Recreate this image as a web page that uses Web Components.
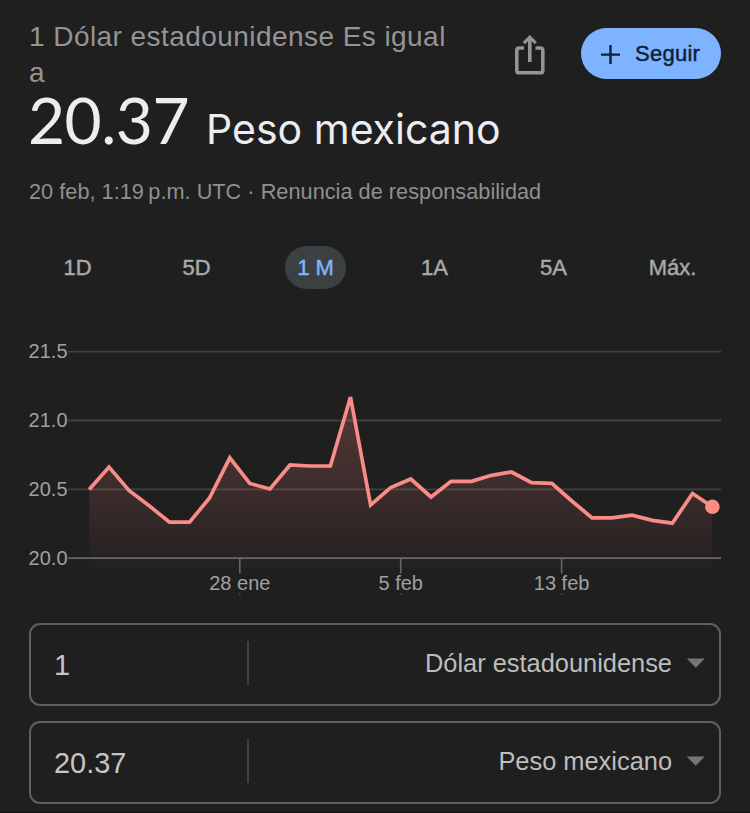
<!DOCTYPE html>
<html lang="es">
<head>
<meta charset="utf-8">
<title>Conversor de divisas</title>
<style>
html,body{margin:0;height:813px;overflow:hidden;background:#1f1f1f}
body{font-family:"Liberation Sans",Arial,sans-serif;color:#9a9a9a}
</style>
</head>
<body>
<currency-page></currency-page>
<script>
function define(name, markup, setup) {
  const template = document.createElement('template');
  template.innerHTML = markup;
  customElements.define(name, class extends HTMLElement {
    connectedCallback() {
      if (this.shadowRoot) return;
      this.attachShadow({mode: 'open'}).append(template.content.cloneNode(true));
      if (setup) setup(this, this.shadowRoot);
    }
  });
}

define('share-button', `
<style>:host{display:block;width:30px;height:42px}svg{display:block}</style>
<svg width="30" height="42" viewBox="0 0 30 42" fill="none" stroke="#949494" stroke-width="3.6">
  <path d="M9 14H4.2Q1.8 14 1.8 16.4V36.4Q1.8 38.8 4.2 38.8H25.4Q27.8 38.8 27.8 36.4V16.4Q27.8 14 25.4 14H20.5"/>
  <path d="M14.8 28V4"/><path d="M8.8 9.2L14.8 3.2L20.8 9.2" stroke-width="3.2"/>
</svg>`);

define('follow-button', `
<style>
:host{display:flex;align-items:center;box-sizing:border-box;width:141px;height:51px;padding-left:20px;gap:15px;border-radius:26px;background:#7eb4ff;color:#102038;font-size:22px;letter-spacing:.25px;-webkit-text-stroke:.45px #102038}
svg{display:block}
</style>
<svg width="19" height="20" viewBox="0 0 19 20" stroke="#102038" stroke-width="2.4"><path d="M0 10.6H19M9.5 1V20"/></svg><slot></slot>`);

define('rate-header', `
<style>
:host{display:block}
.top{display:flex;height:72px}
.from{width:430px;font-size:28px;line-height:36px;letter-spacing:.44px;color:#949494;flex:none}
share-button{margin:15px 0 0 56px}
follow-button{margin:9px 0 0 36px}
.value{display:flex;align-items:baseline;height:58px;line-height:58px;color:#ededf0;white-space:nowrap}
.num{font-family:Lato,sans-serif;font-size:64px;letter-spacing:-.5px;margin-left:-1px}
.cur{font-family:Inter,sans-serif;font-size:41px;margin-left:17px}
.meta{margin-top:30px;font-size:21.7px;line-height:26px;letter-spacing:.03px;color:#8f8f8f;white-space:nowrap}
</style>
<div class="top"><div class="from"><slot name="from"></slot></div><share-button></share-button><follow-button>Seguir</follow-button></div>
<div class="value"><span class="num"><slot name="amount"></slot></span><span class="cur"><slot name="currency"></slot></span></div>
<div class="meta"><slot name="meta"></slot></div>`);

define('range-tab', `
<style>
:host{display:flex;justify-content:center}
span{box-sizing:border-box;height:43px;line-height:43px;padding:0 12px;border-radius:22px;font-size:22px;color:#a9a9a9;-webkit-text-stroke:.45px currentColor;white-space:nowrap}
:host([selected]) span{background:#3b4043;color:#82b4fb}
</style><span><slot></slot></span>`);

define('range-tabs', `
<style>:host{display:grid;grid-template-columns:repeat(6,119px);margin:41px 0 0 -11px}</style><slot></slot>`);

define('rate-chart', `
<style>:host{display:block;height:265px;margin-top:46px}svg{display:block}text{font:20px "Liberation Sans",Arial,sans-serif;fill:#a0a0a0}</style>
<svg width="692" height="265" viewBox="29 335 692 265">
  <defs><linearGradient id="fade" gradientUnits="userSpaceOnUse" x1="0" y1="397" x2="0" y2="568">
    <stop offset="0" stop-color="#ff8880" stop-opacity=".25"/><stop offset="1" stop-color="#ff8880" stop-opacity=".02"/></linearGradient></defs>
  <g id="grid"></g><path id="area" fill="url(#fade)"/>
  <polyline id="line" fill="none" stroke="#f98c86" stroke-width="3.7" stroke-miterlimit="4"/>
  <circle cx="712.4" cy="506.8" r="7.3" fill="#ff8b85"/>
</svg>`, (host, root) => {
  const points = [[89.2,489.5],[109,467],[129,490.5],[149.5,506],[169.5,522.2],[189.5,522.2],[209.5,498],[229.8,457.8],[249.8,483.5],[270,489],[290,465],[310,466],[330.4,466],[350.5,397],[370.6,505],[390.7,487.5],[410.8,479],[431,497],[451,481.3],[471.5,481.3],[491.5,475.3],[511.5,472],[531.5,482.7],[551.8,483.3],[571.8,501],[592,517.8],[612,517.8],[632,515.2],[652.3,520.4],[672.3,523.2],[692.5,493.5],[712.4,506.8]];
  const line = points.map(p => p.join()).join(' ');
  root.getElementById('line').setAttribute('points', line);
  root.getElementById('area').setAttribute('d', `M${line}V568H89.2Z`);
  root.getElementById('grid').innerHTML =
    [['21.5',351.6,358],['21.0',420.5,427],['20.5',489.3,496],['20.0',558.2,565]].map(([t,y,b]) =>
      `<text x="28.6" y="${b}">${t}</text><path d="M68 ${y}H721.5" stroke="${t === '20.0' ? '#666' : '#404141'}" stroke-width="1.8"/>`).join('') +
    [['28 ene',239.8],['5 feb',400.7],['13 feb',561.6]].map(([t,x]) =>
      `<path d="M${x} 558V573.5M${x} 593.5V594.5" stroke="#666" stroke-width="1.6"/><text x="${x}" y="590" text-anchor="middle">${t}</text>`).join('');
});

define('currency-field', `
<style>
:host{display:flex;align-items:center;box-sizing:border-box;width:692px;height:83px;border:2px solid #5d5f64;border-radius:11px;padding:0 14px 0 23px}
.amount{width:193px;font-size:28.9px;color:#c5c5c5;padding-top:1px}
.rule{width:2px;height:44px;background:#414244;margin-top:-4px}
.name{flex:1;text-align:right;font-size:25.4px;color:#bdbdbd;margin-top:-3px;white-space:nowrap}
svg{display:block;margin:-3px 0 0 14px}
</style>
<div class="amount"><slot name="amount"></slot></div><div class="rule"></div>
<div class="name"><slot></slot></div>
<svg width="19" height="10" viewBox="0 0 19 10"><path d="M.8 .4H18.8L9.8 9.8Z" fill="#757575"/></svg>`);

define('currency-page', `
<style>
:host{display:block;box-sizing:border-box;width:750px;height:813px;padding:19px 29px 0;background:#1f1f1f;border-bottom:1px solid #111;overflow:hidden}
.fields{display:grid;gap:15px;margin-top:23px}
</style>
<rate-header>
  <span slot="from">1 Dólar estadounidense Es igual a</span>
  <span slot="amount">20.37</span><span slot="currency">Peso mexicano</span>
  <span slot="meta">20 feb, 1:19&#8201;p.m. UTC · Renuncia de responsabilidad</span>
</rate-header>
<range-tabs><range-tab>1D</range-tab><range-tab>5D</range-tab><range-tab selected>1 M</range-tab><range-tab>1A</range-tab><range-tab>5A</range-tab><range-tab>Máx.</range-tab></range-tabs>
<rate-chart></rate-chart>
<div class="fields">
  <currency-field><span slot="amount">1</span>Dólar estadounidense</currency-field>
  <currency-field><span slot="amount">20.37</span>Peso mexicano</currency-field>
</div>`);
</script>
</body>
</html>
